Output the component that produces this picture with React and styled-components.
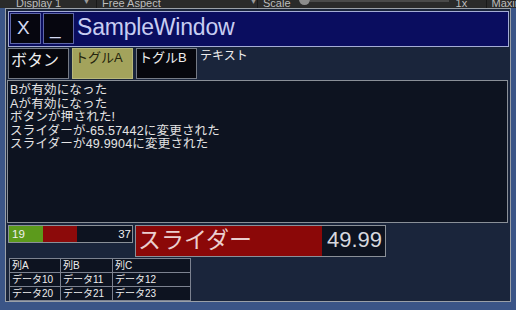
import React from "react";
import styled, { createGlobalStyle } from "styled-components";

const GlobalStyle = createGlobalStyle`
  html, body { margin: 0; padding: 0; background: #3b5587; overflow: hidden; }
  * { box-sizing: border-box; }
`;

const LATIN = `"Liberation Sans", "Noto Sans CJK JP", sans-serif`;

const Screen = styled.div`
  width: 516px;
  height: 310px;
  display: flex;
  flex-direction: column;
  font-family: ${LATIN};
`;

const EditorToolbar = styled.div`
  height: 8px;
  flex: none;
  background: #2a2a2a;
  overflow: hidden;
  display: flex;
  align-items: flex-end;
  padding-left: 16px;
`;

const ToolText = styled.span`
  font-size: 11px;
  line-height: 11px;
  color: #bdbdbd;
  margin-bottom: -1px;
  white-space: nowrap;
  width: ${(p) => p.$w || "auto"};
  margin-left: ${(p) => p.$ml || 0}px;
  flex: none;
`;

const ToolArrow = styled.span`
  font-size: 7px;
  line-height: 8px;
  color: #9a9a9a;
  width: ${(p) => p.$w};
  flex: none;
  margin-bottom: 2px;
`;

const ToolSep = styled.span`
  width: 1px;
  height: 8px;
  background: #191919;
  margin: 0 5px 0 0;
  flex: none;
`;

const ScaleTrack = styled.div`
  width: 150px;
  height: 8px;
  margin-left: 8px;
  flex: none;
  display: flex;
  align-items: flex-start;
`;

const Knob = styled.span`
  width: 11px;
  height: 11px;
  border-radius: 50%;
  background: #8c8c8c;
  margin-top: -6px;
  flex: none;
`;

const TrackLine = styled.span`
  flex: 1;
  height: 2px;
  background: #4a4a4a;
`;

const GameView = styled.div`
  flex: 1;
  background: #3b5587;
  padding: 0 5px 8px 5px;
  display: flex;
`;

const Window = styled.div`
  width: 506px;
  height: 294px;
  border: 1px solid #9aa0a8;
  background: #1a253b;
  display: flex;
  flex-direction: column;
  padding: 2px 1px 0 1px;
`;

const TitleBar = styled.div`
  height: 36px;
  margin: 0 0 0 1px;
  border: 1px solid #a4acd4;
  background: #0a0d5f;
  display: flex;
  align-items: flex-start;
  padding: 1px;
  gap: 2px;
`;

const TitleButton = styled.div`
  width: ${(p) => p.$w}px;
  height: 31px;
  background: #06060f;
  border: 1px solid #5d66a8;
  color: #d4daf2;
  font-size: 19px;
  line-height: 22px;
  padding: 3px 0 0 6px;
  flex: none;
`;

const TitleText = styled.div`
  font-size: 23px;
  line-height: 26px;
  color: #c8cdf2;
  margin-left: 1px;
  padding-top: 1px;
  letter-spacing: -0.2px;
`;

const ControlRow = styled.div`
  display: flex;
  gap: 3px;
  margin: 1px 0 0 1px;
  height: 31px;
`;

const Button = styled.div`
  width: 61px;
  height: 31px;
  flex: none;
  border: 1px solid ${(p) => (p.$on ? "#b8b87a" : "#757b86")};
  background: ${(p) => (p.$on ? "#a3a35c" : "#06070d")};
  color: ${(p) => (p.$on ? "#24240c" : "#eeeeee")};
  font-size: ${(p) => p.$size}px;
  line-height: ${(p) => p.$size + 2}px;
  padding: ${(p) => (p.$size > 14 ? "3px 0 0 2px" : "1px 0 0 2px")};
  white-space: nowrap;
`;

const Label = styled.div`
  font-size: 12px;
  line-height: 14px;
  color: #eeeeee;
  padding-top: 1px;
  white-space: nowrap;
`;

const LogArea = styled.div`
  height: 143px;
  margin: 1px 1px 0 0;
  border: 1px solid #8a9098;
  background: #0d1320;
  padding: 3px 0 0 2px;
  display: flex;
  flex-direction: column;
`;

const LogLine = styled.div`
  font-size: 12.5px;
  line-height: 13.6px;
  height: 13.6px;
  color: #e4e4e4;
  white-space: nowrap;
  letter-spacing: 0.2px;
`;

const BottomRow = styled.div`
  display: flex;
  gap: 2px;
  margin: 2px 0 0 1px;
  align-items: flex-start;
`;

const Progress = styled.div`
  width: 125px;
  height: 18px;
  border: 1px solid #8a9098;
  background: #0d1320;
  display: grid;
  flex: none;
`;

const ProgressTrack = styled.div`
  grid-area: 1 / 1;
  display: flex;
`;

const Segment = styled.div`
  height: 100%;
  background: ${(p) => p.$color};
  flex: none;
`;

const ProgressLabels = styled.div`
  grid-area: 1 / 1;
  display: flex;
  justify-content: space-between;
  align-items: center;
  padding: 0 1px 0 3px;
  font-size: 11.5px;
  color: #f0f0f0;
`;

const Slider = styled.div`
  width: 251px;
  height: 32px;
  border: 1px solid #8a9098;
  background: #0d1320;
  display: flex;
`;

const SliderFill = styled.div`
  width: 186px;
  flex: none;
  background: #8b0808;
  color: #ebcfcf;
  font-size: 23px;
  line-height: 26px;
  padding: 1px 0 0 2px;
  white-space: nowrap;
`;

const SliderValue = styled.div`
  flex: 1;
  color: #d6d8de;
  font-size: 22px;
  line-height: 26px;
  padding: 1px 0 0 5px;
`;

const DataTable = styled.table`
  margin: 1px 0 0 2px;
  width: 181px;
  border-collapse: collapse;
  background: #0d1320;
  border: 1px solid #8a9098;
  table-layout: fixed;
`;

const Cell = styled.td`
  border: 1px solid #7c8290;
  height: 14px;
  padding: 0 0 0 2px;
  font-size: 10px;
  line-height: 12px;
  color: #eeeeee;
  white-space: nowrap;
  width: ${(p) => p.$w}px;
`;

const logs = [
  "Bが有効になった",
  "Aが有効になった",
  "ボタンが押された!",
  "スライダーが-65.57442に変更された",
  "スライダーが49.9904に変更された",
];

const rows = [
  ["列A", "列B", "列C"],
  ["データ10", "データ11", "データ12"],
  ["データ20", "データ21", "データ23"],
];
const colWidths = [51, 52, 78];

export default function App() {
  return (
    <>
      <GlobalStyle />
      <Screen>
        <EditorToolbar>
          <ToolText $w="67px">Display 1</ToolText>
          <ToolArrow $w="13px">▼</ToolArrow>
          <ToolSep />
          <ToolText $w="148px">Free Aspect</ToolText>
          <ToolArrow $w="7px">▼</ToolArrow>
          <ToolSep />
          <ToolText>Scale</ToolText>
          <ScaleTrack>
            <Knob />
            <TrackLine />
          </ScaleTrack>
          <ToolText $w="30px" $ml={7}>1x</ToolText>
          <ToolSep />
          <ToolText>Maximize On Play</ToolText>
        </EditorToolbar>
        <GameView>
          <Window>
            <TitleBar>
              <TitleButton $w={31}>X</TitleButton>
              <TitleButton $w={31}>_</TitleButton>
              <TitleText>SampleWindow</TitleText>
            </TitleBar>
            <ControlRow>
              <Button $size={16}>ボタン</Button>
              <Button $size={13} $on>トグルA</Button>
              <Button $size={13}>トグルB</Button>
              <Label>テキスト</Label>
            </ControlRow>
            <LogArea>
              {logs.map((l, i) => (
                <LogLine key={i}>{l}</LogLine>
              ))}
            </LogArea>
            <BottomRow>
              <Progress>
                <ProgressTrack>
                  <Segment $color="#5c9a1c" style={{ width: "34px" }} />
                  <Segment $color="#8c0a0a" style={{ width: "34px" }} />
                </ProgressTrack>
                <ProgressLabels>
                  <span>19</span>
                  <span>37</span>
                </ProgressLabels>
              </Progress>
              <Slider>
                <SliderFill>スライダー</SliderFill>
                <SliderValue>49.99</SliderValue>
              </Slider>
            </BottomRow>
            <DataTable>
              <tbody>
                {rows.map((r, i) => (
                  <tr key={i}>
                    {r.map((c, j) => (
                      <Cell key={j} $w={colWidths[j]}>{c}</Cell>
                    ))}
                  </tr>
                ))}
              </tbody>
            </DataTable>
          </Window>
        </GameView>
      </Screen>
    </>
  );
}
